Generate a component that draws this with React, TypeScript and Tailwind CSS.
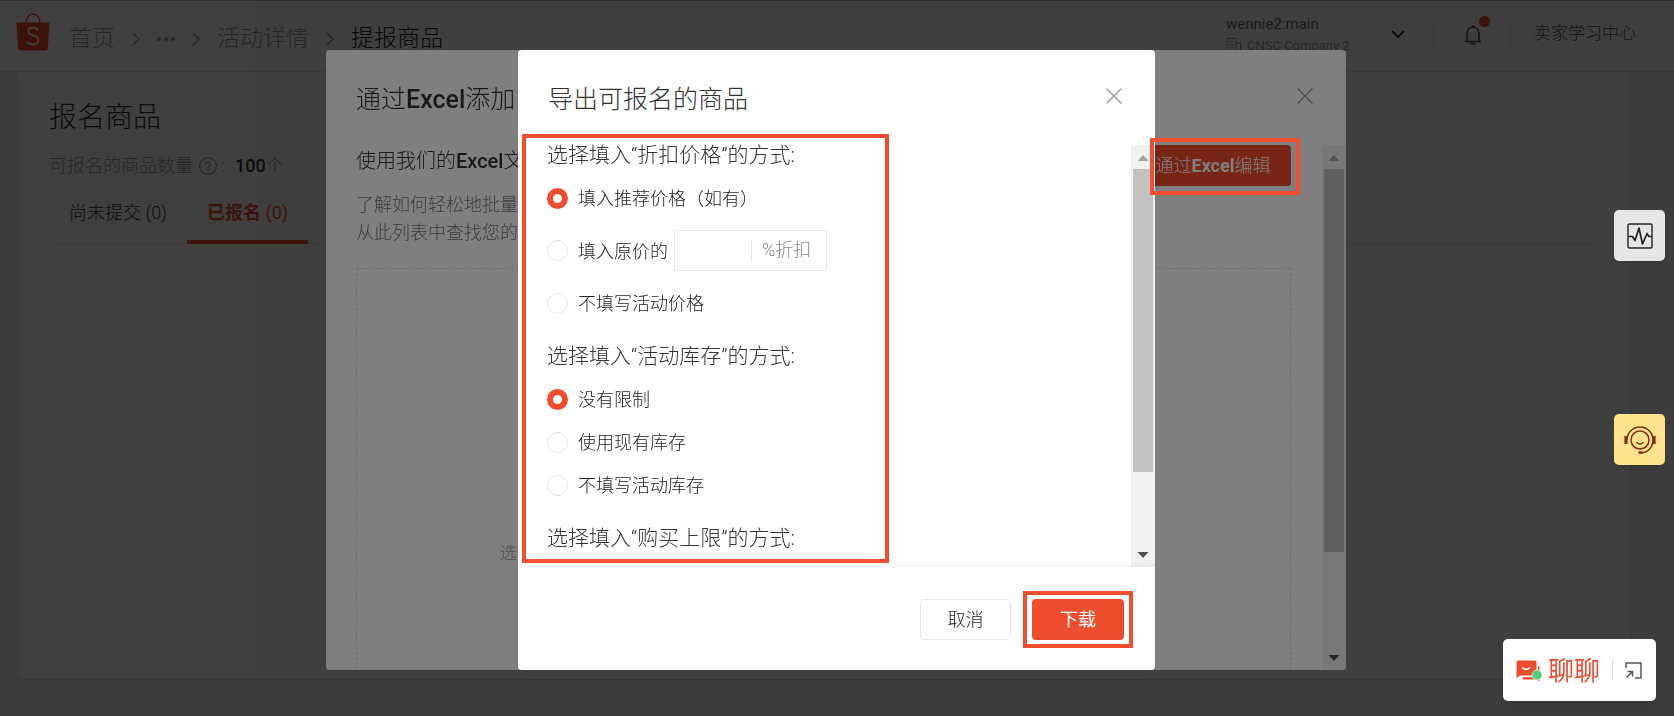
import type { ReactNode } from "react";

const priceOptions = [
  { id: "price-recommended", label: "填入推荐价格（如有）" },
  { id: "price-percent", label: "填入原价的", withInput: true },
  { id: "price-empty", label: "不填写活动价格" },
];

const stockOptions = [
  { id: "stock-unlimited", label: "没有限制" },
  { id: "stock-current", label: "使用现有库存" },
  { id: "stock-empty", label: "不填写活动库存" },
];

function ShopLogo() {
  return (
    <svg className="w-[34px] h-[38px]" viewBox="0 0 34 38" fill="none">
      <path d="M10 10C10 4.5 13 1 17 1s7 3.500 7 9" stroke="#ee4d2d" strokeWidth="1.600" />
      <path d="M.5 9.500h33L32 34a3.500 3.500 0 0 1-3.500 3.500h-23A3.500 3.500 0 0 1 2 34z" fill="#ee4d2d" />
      <path d="M22 16.500c-1.500-1.300-3-1.900-5-1.900-2.900 0-4.800 1.500-4.800 3.700 0 5.200 10.300 3 10.300 8.700 0 2.700-2.300 4.500-5.500 4.500-2.300 0-4.300-.8-6-2.300" stroke="#fff" strokeWidth="1.800" strokeLinecap="round" />
    </svg>
  );
}

function Separator() {
  return (
    <svg className="w-2 h-[14px] mx-[17px]" viewBox="0 0 8 14" fill="none" stroke="#999" strokeWidth="1.300">
      <path d="M1 1l6 6-6 6" />
    </svg>
  );
}

function CloseButton() {
  return (
    <button aria-label="close" className="text-[#999] cursor-pointer">
      <svg className="size-4" viewBox="0 0 16 16" stroke="currentColor" strokeWidth="1.300">
        <path d="M.5.5l15 15M15.500.5l-15 15" />
      </svg>
    </button>
  );
}

function Scrollbar({ thumb }: { thumb: string }) {
  return (
    <div className="w-6 shrink-0 bg-[#f1f1f1] flex flex-col items-center">
      <svg className="w-3 h-6 shrink-0" viewBox="0 0 12 24">
        <path d="M.5 16h11L6 10z" fill="#a3a3a3" />
      </svg>
      <div className="flex-1 w-5">
        <div className={`bg-[#c1c1c1] ${thumb}`} />
      </div>
      <svg className="w-3 h-6 shrink-0" viewBox="0 0 12 24">
        <path d="M.5 9h11L6 15z" fill="#505050" />
      </svg>
    </div>
  );
}

function Overlay({ className, children }: { className: string; children: ReactNode }) {
  return (
    <div className={`fixed inset-0 bg-black/50 flex justify-center items-stretch pt-[50px] pb-[46px] ${className}`}>
      {children}
    </div>
  );
}

function OptionGroup({ title, name, options }: { title: string; name: string; options: { id: string; label: string; withInput?: boolean }[] }) {
  return (
    <section className="mb-8">
      <h3 className="text-[21px] leading-5 text-[#333] mb-[22px]">{title}</h3>
      <div className="flex flex-col gap-[21px]">
        {options.map((option, i) => (
          <div key={option.id} className="flex items-center">
            <input
              type="radio"
              id={option.id}
              name={name}
              defaultChecked={i === 0}
              className="appearance-none size-[21px] shrink-0 rounded-full border border-[#e5e5e5] checked:border-[6px] checked:border-[#ee4d2d] mr-[10px]"
            />
            <label htmlFor={option.id} className="pt-[2px] text-[18px] leading-5 text-[#222]">{option.label}</label>
            {option.withInput && (
              <div className="ml-[6px] flex items-center h-[41px] w-[153px] border border-[#e5e5e5]">
                <input type="text" aria-label={option.label} className="w-[76px] h-full px-3 text-[18px] outline-none" />
                <span className="flex-1 border-l border-[#e5e5e5] pl-[10px] pb-[2px] text-[18px] leading-5 text-[#888]">%折扣</span>
              </div>
            )}
          </div>
        ))}
      </div>
    </section>
  );
}

function TopBar() {
  return (
    <header className="h-[71px] bg-white border-b border-[#e5e5e5] flex items-start pl-4 pr-[38px]">
      <div className="pt-3">
        <ShopLogo />
      </div>
      <nav className="flex items-center h-[76px] ml-[19px] text-[23px] text-[#999]">
        <a href="#home">首页</a>
        <Separator />
        <span className="flex gap-[3px]">
          <i className="size-1 rounded-full bg-[#999]" />
          <i className="size-1 rounded-full bg-[#999]" />
          <i className="size-1 rounded-full bg-[#999]" />
        </span>
        <Separator />
        <a href="#campaign">活动详情</a>
        <Separator />
        <span className="text-[#222]">提报商品</span>
      </nav>
      <div className="ml-auto flex">
        <button className="flex items-center text-left">
          <span className="pt-[14px] w-[165px] font-normal">
            <span className="block text-[15px] leading-[18px] text-[#666]">wennie2:main</span>
            <span className="flex items-center gap-[5px] text-[13px] leading-5 mt-[3px] text-[#999]">
              <svg className="size-4" viewBox="0 0 16 16" fill="none" stroke="currentColor">
                <path d="M1 15.500V.5h9v15M3 4h5M3 7h5M3 10h5M10 5h4.500v10.500M0 15.500h16" />
              </svg>
              CNSC Company 2
            </span>
          </span>
          <svg className="w-[14px] h-[9px] mt-[11px]" viewBox="0 0 14 9" fill="none" stroke="#222" strokeWidth="2">
            <path d="M1 1l6 6 6-6" />
          </svg>
        </button>
        <div className="mt-[19px] h-[30px] ml-[28px] w-[79px] border-x border-[#e5e5e5] flex justify-center items-start">
          <button aria-label="notifications" className="relative mt-1">
            <svg className="w-[18px] h-[21px]" viewBox="0 0 18 21" fill="none" stroke="#444" strokeWidth="1.400">
              <path d="M1 17.500h16M3 17.500V9a6 6 0 0 1 12 0v8.500M6.500 19.800h5M9 1v2" />
            </svg>
            <span className="absolute -top-2 -right-2 size-[11px] rounded-full bg-[#ee4d2d]" />
          </button>
        </div>
        <a href="#learn" className="mt-5 ml-[22px] text-[17px] leading-6 text-[#555]">卖家学习中心</a>
      </div>
    </header>
  );
}

function ProductCard() {
  return (
    <main className="flex-1 flex flex-col pl-[18px] pr-[44px] mb-[37px]">
      <div className="flex-1 bg-white rounded-b-md shadow px-[31px] pt-[26px]">
        <h1 className="text-[28px] leading-10 text-[#333]">报名商品</h1>
        <div className="mt-4 flex items-center text-[18px] leading-6 text-[#999]">
          可报名的商品数量
          <svg className="size-[18px] ml-[6px]" viewBox="0 0 18 18" fill="none" stroke="currentColor" strokeWidth="1.200">
            <circle cx="9" cy="9" r="8.300" />
            <path d="M6.800 7.200a2.200 2.200 0 1 1 3.500 1.700c-.8.6-1.200 1-1.200 1.900M9.100 12v1.400" />
          </svg>
          <span className="w-[18px] pl-1">:</span>
          <b className="font-medium text-[#333]">100</b>个
          <span className="ml-10">剩</span>
        </div>
        <div role="tablist" className="mt-[13px] flex border-b border-[#e5e5e5] text-[18px]">
          <button role="tab" className="h-[52px] px-5 pb-[10px] text-[#333]">尚未提交 (0)</button>
          <button role="tab" aria-selected className="-mb-px h-[53px] px-5 pb-[6px] text-[#ee4d2d] font-bold border-b-4 border-[#ee4d2d]">
            已报名 <span className="font-normal">(0)</span>
          </button>
        </div>
      </div>
    </main>
  );
}

function ExcelModal() {
  return (
    <div role="dialog" className="w-full max-w-[1020px] bg-white rounded-[4px] flex flex-col overflow-hidden">
      <div className="h-[95px] shrink-0 flex items-start justify-between pl-[30px] pr-[33px]">
        <h2 className="text-[25px] leading-[30px] mt-[35px] text-[#333]">通过<span className="font-medium">Excel</span>添加</h2>
        <div className="mt-[38px] leading-none"><CloseButton /></div>
      </div>
      <div className="flex-1 min-h-0 flex">
        <div className="flex-1 flex flex-col pl-[30px] pr-[31px]">
          <div className="flex items-start justify-between">
            <h3 className="text-[20px] leading-8 text-[#333]">使用我们的<span className="font-medium">Excel</span>文</h3>
            <button className="h-[41px] w-[156px] rounded-[4px] bg-[#ee4d2d] text-white text-[18px]">
              通过<span className="font-bold">Excel</span>编辑
            </button>
          </div>
          <p className="mt-[5px] text-[18px] leading-7 text-[#777]">
            了解如何轻松地批量<br />从此列表中查找您的
          </p>
          <div className="mt-[21px] flex-1 border border-b-0 border-dashed border-[#ddd] flex items-end pl-[143px] pb-[105px]">
            <span className="text-[17px] leading-6 text-[#999]">选</span>
          </div>
        </div>
        <Scrollbar thumb="h-[383px]" />
      </div>
    </div>
  );
}

function ExportModal() {
  return (
    <div role="dialog" className="relative w-full max-w-[637px] bg-white rounded-[4px] flex flex-col">
      <div className="h-[95px] shrink-0 flex items-start justify-between pl-[30px] pr-[33px]">
        <h2 className="text-[25px] leading-[30px] mt-[35px] text-[#333]">导出可报名的商品</h2>
        <div className="mt-[38px] leading-none"><CloseButton /></div>
      </div>
      <div className="flex-1 min-h-0 flex">
        <div className="flex-1 pl-[29px]">
          <OptionGroup title="选择填入“折扣价格”的方式:" name="price" options={priceOptions} />
          <OptionGroup title="选择填入“活动库存”的方式:" name="stock" options={stockOptions} />
          <OptionGroup title="选择填入“购买上限”的方式:" name="limit" options={[]} />
        </div>
        <Scrollbar thumb="h-[303px]" />
      </div>
      <div className="h-[103px] shrink-0 flex items-start justify-end gap-[21px] pt-8 pr-[31px] shadow-[0_-2px_6px_rgba(0,0,0,0.06)]">
        <button className="h-[41px] w-[91px] rounded-[4px] border border-[#e5e5e5] text-[18px] text-[#222]">取消</button>
        <div className="relative">
          <button className="h-[41px] w-[92px] rounded-[4px] bg-[#ee4d2d] text-white text-[18px] font-normal">下载</button>
          <div className="absolute -inset-x-[9px] -inset-y-2 border-4 border-[#f04e2e] pointer-events-none" />
        </div>
      </div>

      {/* step highlights */}
      <div className="absolute left-1 top-[84px] w-[367px] h-[429px] border-4 border-[#f04e2e] pointer-events-none" />
      <div className="absolute left-[632px] top-[88px] w-[150px] h-[57px] border-4 border-[#f04e2e] pointer-events-none" />
    </div>
  );
}

function FloatingTools() {
  return (
    <>
      <button aria-label="diagnosis" className="fixed right-[9px] top-[210px] size-[51px] rounded-[5px] bg-[#e6e6e6] shadow-md flex items-center justify-center">
        <svg className="size-[26px]" viewBox="0 0 26 26" fill="none" stroke="#222" strokeWidth="1.400" strokeLinejoin="round">
          <rect x="1" y="1" width="24" height="24" rx="1.500" />
          <path d="M1 13.500h4.500l2.500 4L12 5l3.500 16L20 10.500l2 3h3" strokeWidth="1.700" />
        </svg>
      </button>
      <button aria-label="support" className="fixed right-[9px] top-[414px] size-[51px] rounded-[5px] bg-[#ffe28c] shadow-md flex items-center justify-center">
        <svg className="w-8 h-[30px]" viewBox="0 0 32 30" fill="none" stroke="#7a3010" strokeWidth="1.500">
          <circle cx="16" cy="15" r="9" />
          <path d="M3 15a13 13 0 0 1 26 0c0 7-5 12.500-12 12.800" />
          <path d="M12.500 17c1.500 2.600 5.500 2.600 7 0" />
          <path d="M2 11v8M30 11v8" strokeWidth="3.200" />
          <path d="M14.500 27.600h4" strokeWidth="2.600" />
        </svg>
      </button>
      <div className="fixed right-[18px] top-[639px] h-[62px] w-[153px] rounded-[5px] bg-white shadow-lg flex items-center pl-[13px]">
        <button className="flex items-center pt-[2px] text-[26px] font-normal text-[#ee4d2d]">
          <svg className="w-[26px] h-6 mr-[6px]" viewBox="0 0 26 24">
            <path d="M2 1.500h17A1.500 1.500 0 0 1 20.500 3v13.500H4L.5 19V3A1.500 1.500 0 0 1 2 1.500z" fill="#ee4d2d" />
            <path d="M22 7.500h1.500V23l-2-2.500H6.500v-2.300H22z" fill="#ee4d2d" />
            <path d="M6 8.500c2 2.200 6 2.200 8 0" stroke="#fff" strokeWidth="1.500" fill="none" />
            <circle cx="21" cy="16" r="5" fill="#55cc77" stroke="#fff" strokeWidth=".6" />
          </svg>
          聊聊
        </button>
        <span className="h-5 border-l border-[#d8d8d8] ml-[12px]" />
        <button aria-label="expand" className="ml-3">
          <svg className="size-[17px]" viewBox="0 0 17 17" fill="none" stroke="#555" strokeWidth="1.500">
            <path d="M1 6V1h15v15h-6M1.500 15.500L7 10M2.500 9.500h5v5" />
          </svg>
        </button>
      </div>
    </>
  );
}

export default function App() {
  return (
    <div className="min-h-screen flex flex-col bg-[#f4f4f4] border-t border-[#bbb] font-light font-['Roboto','Noto_Sans_CJK_SC',sans-serif]">
      <TopBar />
      <ProductCard />
      <Overlay className="pr-[2px]">
        <ExcelModal />
      </Overlay>
      <Overlay className="pr-px">
        <ExportModal />
      </Overlay>
      <FloatingTools />
    </div>
  );
}
